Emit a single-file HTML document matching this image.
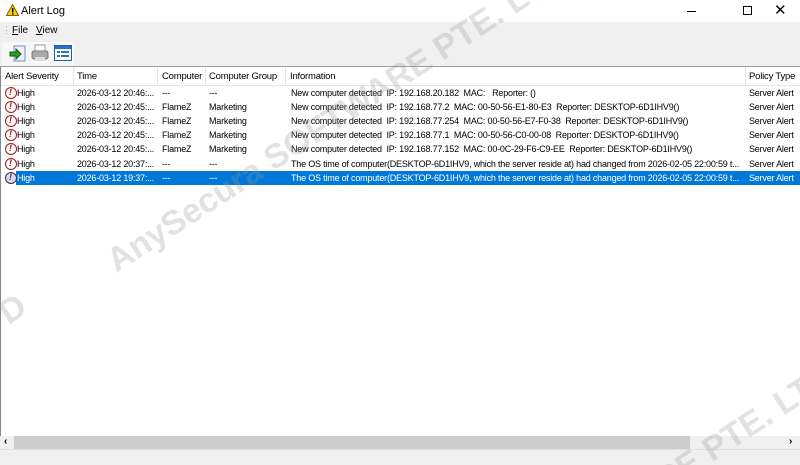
<!DOCTYPE html><html><head><style>
*{margin:0;padding:0;box-sizing:border-box}
html,body{width:800px;height:465px;overflow:hidden}
body{background:#fff;font-family:"Liberation Sans",sans-serif;font-size:9px;letter-spacing:-0.2px;color:#000;position:relative}
.title{position:absolute;top:0;left:0;width:800px;height:22px;background:#fff;font-size:11px;letter-spacing:0}
.menu{position:absolute;top:22px;left:0;width:800px;height:18px;background:#f0f0f0;font-size:10px;letter-spacing:0}
.tool{position:absolute;top:40px;left:0;width:800px;height:27px;background:#f0f0f0;border-bottom:1px solid #a0a0a0}
.list{position:absolute;top:67px;left:0;width:800px;height:369px;background:#fff;border-left:1px solid #888}
.hdr{position:absolute;top:0;left:0;width:800px;height:19px;border-bottom:1px solid #e5e5e5}
.hdr span{position:absolute;top:4px;font-size:9.5px;white-space:nowrap}
.sep{position:absolute;top:0;width:1px;height:19px;background:#e5e5e5}
.row{position:absolute;left:0;width:800px;height:14px}
.row span{position:absolute;top:2px;white-space:nowrap;overflow:hidden}
.sel{background:#0078d7;color:#fff}
.ic{position:absolute;left:4px;top:1px;width:12px;height:12px;border-radius:50%;border:1.5px solid #9b1c1c;background:#fff}
.ic::after{content:"!";position:absolute;left:3px;top:-1px;font-weight:bold;font-size:9px;color:#c00}
.sb{position:absolute;top:436px;left:0;width:800px;height:13px;background:#f0f0f0}
.st{position:absolute;top:449px;left:0;width:800px;height:16px;background:#f0f0f0;border-top:1px solid #e0e0e0}
.wmw{position:absolute;left:0;top:0;width:800px;height:465px;overflow:hidden;pointer-events:none}
.wm{position:absolute;font-weight:bold;font-size:34px;letter-spacing:0;color:rgba(150,150,150,.28);transform-origin:0 0;white-space:nowrap;transform:rotate(-33deg)}
</style></head><body>
<div class="title">
<svg style="position:absolute;left:6px;top:4px" width="13" height="12"><polygon points="6.5,0.5 12.5,11.5 0.5,11.5" fill="#f5d000" stroke="#806000" stroke-width="1"/><rect x="6" y="4" width="1.4" height="4.5" fill="#000"/><rect x="6" y="9.3" width="1.4" height="1.3" fill="#000"/></svg>
<span style="position:absolute;left:21px;top:5px">Alert Log</span>
<span style="position:absolute;left:687px;top:11px;width:9px;height:1px;background:#000"></span>
<span style="position:absolute;left:743px;top:6px;width:9px;height:9px;border:1px solid #000"></span>
<span style="position:absolute;left:774px;top:1px;font-size:15px">✕</span>
</div>
<div class="menu"><span style="position:absolute;left:2px;top:3px;color:#aaa;font-size:9px">⋮</span><span style="position:absolute;left:12px;top:3px"><u>F</u>ile</span><span style="position:absolute;left:36px;top:3px"><u>V</u>iew</span></div>
<div class="tool">
<div style="position:absolute;left:2px;top:2px;width:72px;height:24px;background:#f7f7f7"></div>
<svg style="position:absolute;left:9px;top:5px" width="18" height="18"><rect x="5" y="1" width="11" height="15" fill="#eef" stroke="#7890b8"/><polygon points="1,7 7,7 7,4 12,9 7,14 7,11 1,11" fill="#2a9a2a" stroke="#106010"/></svg>
<svg style="position:absolute;left:31px;top:4px" width="18" height="18"><rect x="4" y="1" width="10" height="7" fill="#fff" stroke="#999"/><rect x="1" y="7" width="16" height="8" rx="2" fill="#aaa" stroke="#777"/><rect x="4" y="13" width="10" height="4" fill="#ddd"/></svg>
<svg style="position:absolute;left:54px;top:5px" width="18" height="16"><rect x="0.5" y="0.5" width="17" height="15" fill="#fff" stroke="#1c5fb0"/><rect x="1" y="1" width="16" height="3" fill="#2a6fc8"/><rect x="3" y="6" width="3" height="2" fill="#2a6fc8"/><rect x="7" y="6" width="8" height="2" fill="#2a6fc8"/><rect x="3" y="10" width="3" height="2" fill="#2a6fc8"/><rect x="7" y="10" width="8" height="2" fill="#2a6fc8"/></svg>
</div>
<div class="list">
<div class="hdr"><span style="left:4px">Alert Severity</span><span style="left:76px">Time</span><span style="left:161px">Computer</span><span style="left:208px">Computer Group</span><span style="left:289px">Information</span><span style="left:748px">Policy Type</span>
<div class="sep" style="left:72px"></div><div class="sep" style="left:156px"></div><div class="sep" style="left:204px"></div><div class="sep" style="left:284px"></div><div class="sep" style="left:744px"></div></div>
</div>
<div style="position:absolute;top:86px;left:1px;width:799px">
<div class="row" style="top:0"><i class="ic"></i><span style="left:16px">High</span><span style="left:76px;width:80px">2026-03-12 20:46:...</span><span style="left:161px">---</span><span style="left:208px">---</span><span style="left:290px;width:452px">New computer detected&nbsp; IP: 192.168.20.182&nbsp; MAC:&nbsp;&nbsp; Reporter: ()</span><span style="left:748px">Server Alert</span></div>
<div class="row" style="top:14px"><i class="ic"></i><span style="left:16px">High</span><span style="left:76px;width:80px">2026-03-12 20:45:...</span><span style="left:161px">FlameZ</span><span style="left:208px">Marketing</span><span style="left:290px;width:452px">New computer detected&nbsp; IP: 192.168.77.2&nbsp; MAC: 00-50-56-E1-80-E3&nbsp; Reporter: DESKTOP-6D1IHV9()</span><span style="left:748px">Server Alert</span></div>
<div class="row" style="top:28px"><i class="ic"></i><span style="left:16px">High</span><span style="left:76px;width:80px">2026-03-12 20:45:...</span><span style="left:161px">FlameZ</span><span style="left:208px">Marketing</span><span style="left:290px;width:452px">New computer detected&nbsp; IP: 192.168.77.254&nbsp; MAC: 00-50-56-E7-F0-38&nbsp; Reporter: DESKTOP-6D1IHV9()</span><span style="left:748px">Server Alert</span></div>
<div class="row" style="top:42px"><i class="ic"></i><span style="left:16px">High</span><span style="left:76px;width:80px">2026-03-12 20:45:...</span><span style="left:161px">FlameZ</span><span style="left:208px">Marketing</span><span style="left:290px;width:452px">New computer detected&nbsp; IP: 192.168.77.1&nbsp; MAC: 00-50-56-C0-00-08&nbsp; Reporter: DESKTOP-6D1IHV9()</span><span style="left:748px">Server Alert</span></div>
<div class="row" style="top:56px"><i class="ic"></i><span style="left:16px">High</span><span style="left:76px;width:80px">2026-03-12 20:45:...</span><span style="left:161px">FlameZ</span><span style="left:208px">Marketing</span><span style="left:290px;width:452px">New computer detected&nbsp; IP: 192.168.77.152&nbsp; MAC: 00-0C-29-F6-C9-EE&nbsp; Reporter: DESKTOP-6D1IHV9()</span><span style="left:748px">Server Alert</span></div>
<div class="row" style="top:71px"><i class="ic"></i><span style="left:16px">High</span><span style="left:76px;width:80px">2026-03-12 20:37:...</span><span style="left:161px">---</span><span style="left:208px">---</span><span style="left:290px;width:452px">The OS time of computer(DESKTOP-6D1IHV9, which the server reside at) had changed from 2026-02-05 22:00:59 t...</span><span style="left:748px">Server Alert</span></div>
<div class="row sel" style="top:85px;left:15px;width:784px"></div>
<div class="row" style="top:85px;color:#fff"><i class="ic" style="border-color:#335;background:#cde"></i><span style="left:16px">High</span><span style="left:76px;width:80px">2026-03-12 19:37:...</span><span style="left:161px">---</span><span style="left:208px">---</span><span style="left:290px;width:452px">The OS time of computer(DESKTOP-6D1IHV9, which the server reside at) had changed from 2026-02-05 22:00:59 t...</span><span style="left:748px">Server Alert</span></div>
</div>
<div class="sb"><div style="position:absolute;left:14px;top:0;width:676px;height:13px;background:#cdcdcd"></div><span style="position:absolute;left:4px;top:0;font-size:10px;font-weight:bold">‹</span><span style="position:absolute;left:789px;top:0;font-size:10px;font-weight:bold">›</span></div>
<div class="st"></div>
<div class="wmw">
<div class="wm" style="left:100px;top:248px">AnySecura SOFTWARE PTE. LTD</div>
<div class="wm" style="left:-8px;top:300px">D</div>
<div class="wm" style="left:648px;top:468px">RE PTE. LTD</div>
</div>
</body></html>
